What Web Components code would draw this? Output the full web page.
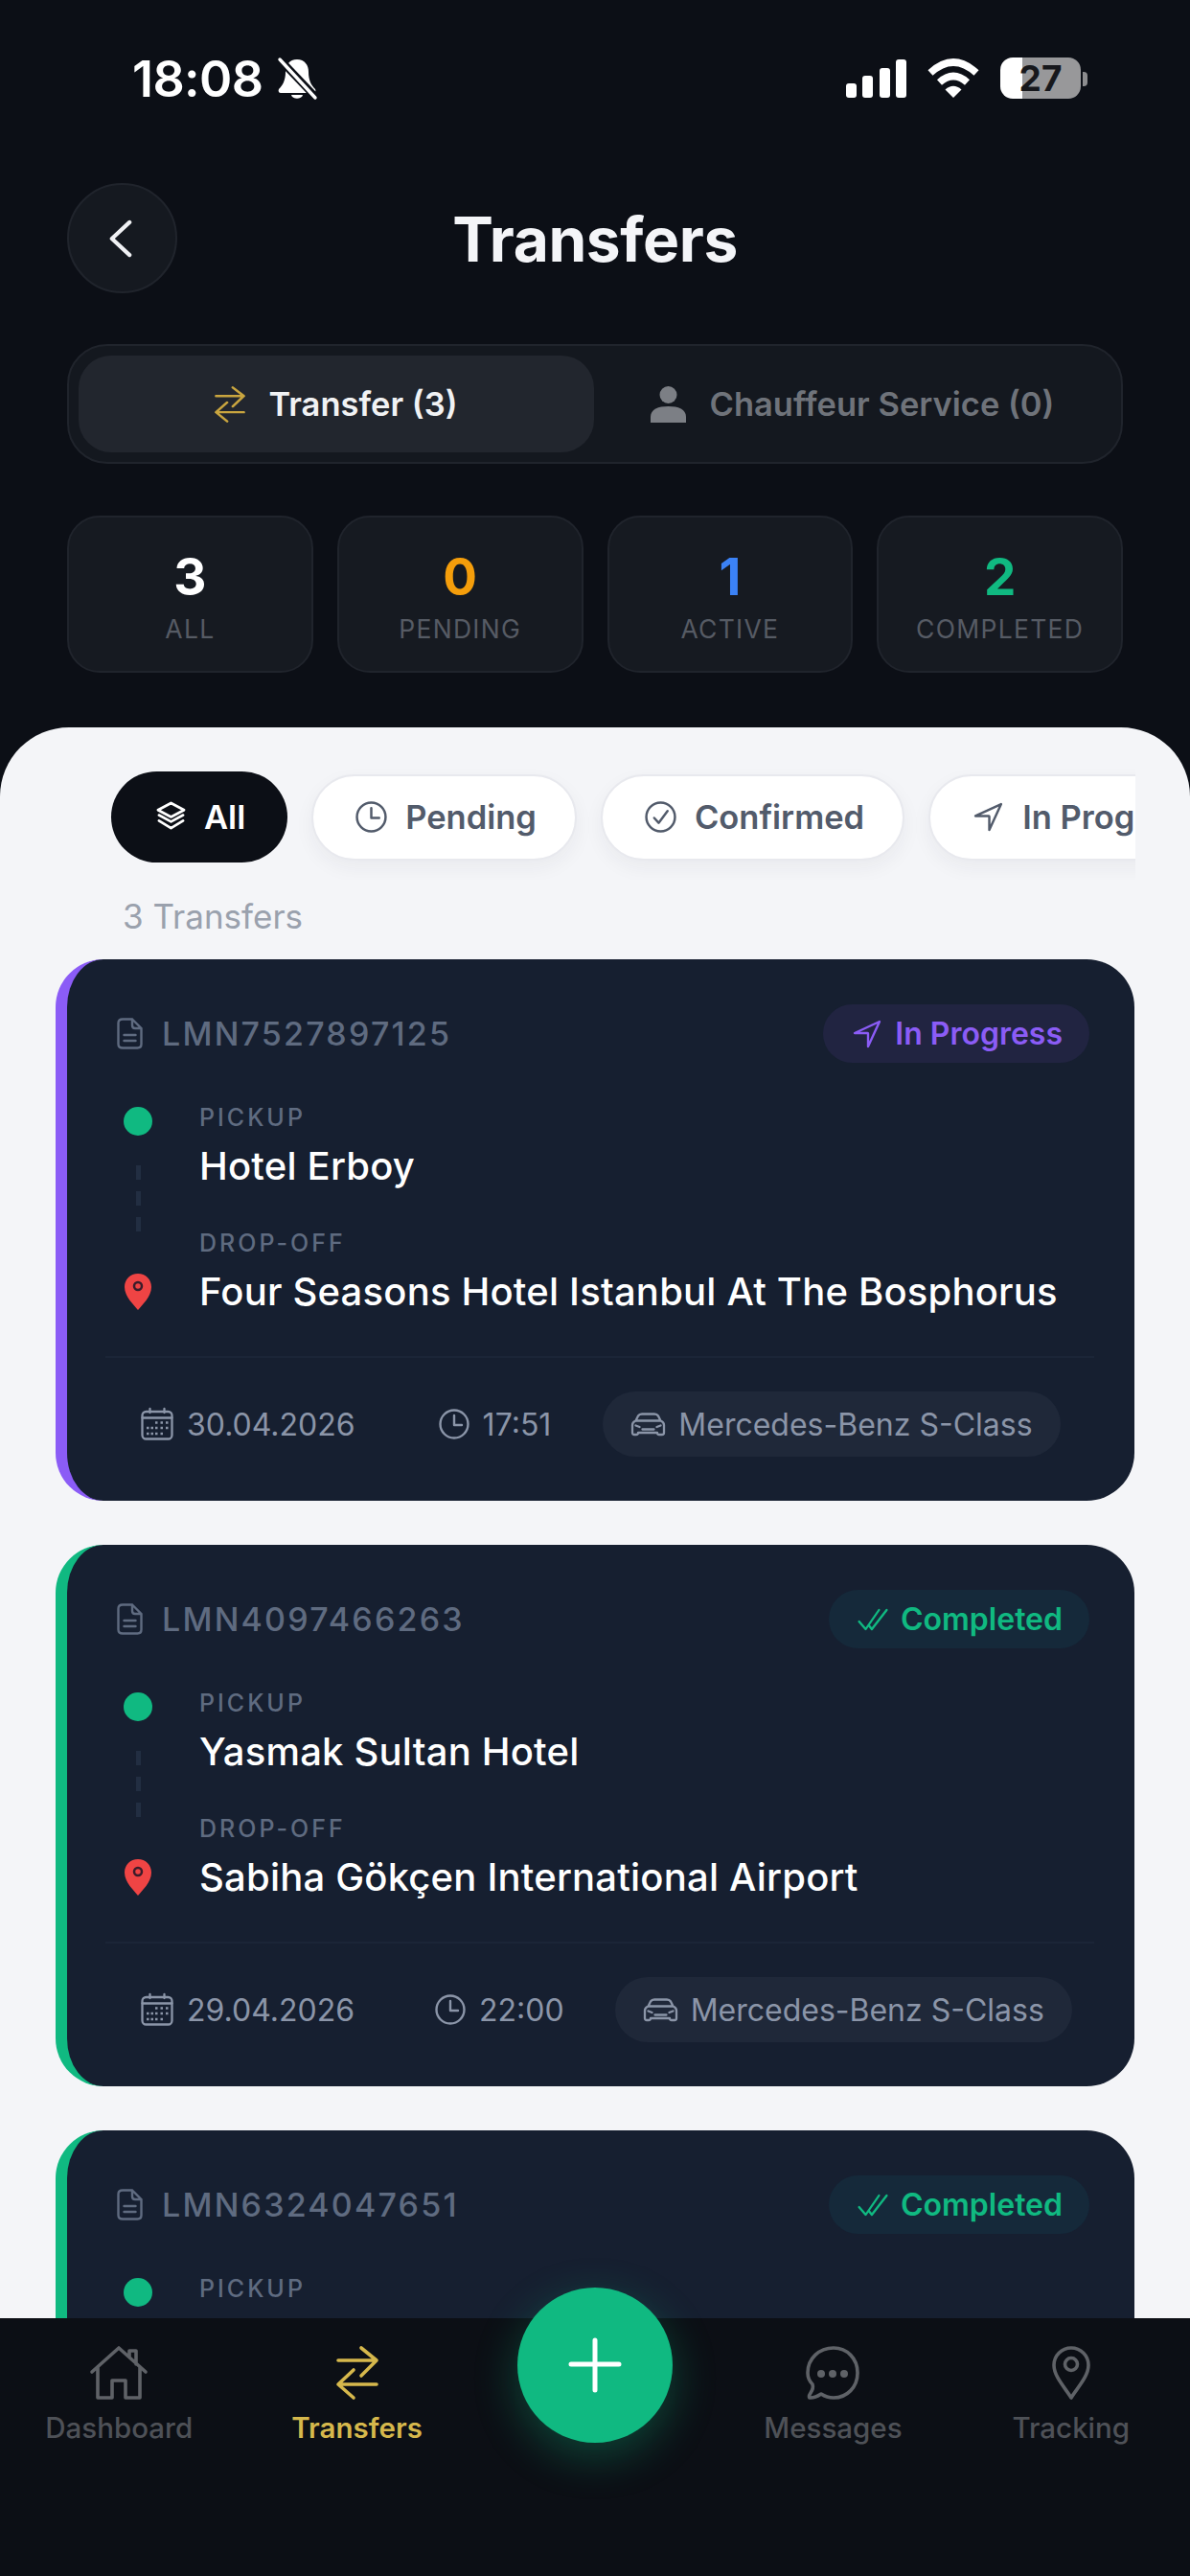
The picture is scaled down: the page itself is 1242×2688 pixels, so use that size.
<!DOCTYPE html>
<html lang="en">
<head>
<meta charset="utf-8">
<title>Transfers</title>
<style>
  html, body { margin: 0; background: #0c0f16; }
  body { font-family: Inter, "Liberation Sans", sans-serif; }
</style>
</head>
<body>
<transfers-app></transfers-app>

<script>
const ICONS = {
  chevron: { box: '0 0 26 40', body: '<path d="M23 2 3 20l20 18" fill="none" stroke="currentColor" stroke-width="4.5" stroke-linecap="round" stroke-linejoin="round"/>' },
  swap: { box: '0 0 44 56', body: '<path d="M2 15h39M26 2l16 13-16 16M42 40H3M18 25 2 40l16 14" fill="none" stroke="currentColor" stroke-width="3.6" stroke-linecap="round" stroke-linejoin="round"/>' },
  person: { box: '0 0 37 38', body: '<circle cx="18.5" cy="9" r="9" fill="currentColor"/><path d="M0 38v-6c0-8 8-11 18.5-11S37 24 37 32v6z" fill="currentColor"/>' },
  layers: { box: '0 0 34 34', body: '<path d="M17 2 31 9.5 17 17 3 9.5zM4 15l13 7 13-7M4 21l13 8 13-8" fill="none" stroke="currentColor" stroke-width="2.8" stroke-linejoin="round" stroke-linecap="round"/>' },
  clock: { box: '0 0 32 32', body: '<circle cx="16" cy="16" r="14.5" fill="none" stroke="currentColor" stroke-width="2.4"/><path d="M16 7v10h8" fill="none" stroke="currentColor" stroke-width="2.4" stroke-linecap="round" stroke-linejoin="round"/>' },
  check: { box: '0 0 32 32', body: '<circle cx="16" cy="16" r="14.5" fill="none" stroke="currentColor" stroke-width="2.4"/><path d="m9.5 17 4.5 5 9-12" fill="none" stroke="currentColor" stroke-width="2.4" stroke-linecap="round" stroke-linejoin="round"/>' },
  navigate: { box: '0 0 512 512', body: '<path d="M464 48 48 240.14h216a8 8 0 0 1 8 8V464z" fill="none" stroke="currentColor" stroke-width="38" stroke-linecap="round" stroke-linejoin="round"/>' },
  doublecheck: { box: '0 0 30 24', body: '<path d="m1.5 14 6.5 8L21 2M11 18l3 4L28.5 2" fill="none" stroke="currentColor" stroke-width="2.2" stroke-linecap="round" stroke-linejoin="round"/>' },
  doc: { box: '0 0 27 33', body: '<path d="M6 1.5h10L25.5 11v16.5q0 4-4 4H6q-4.5 0-4.5-4V5.5q0-4 4.5-4zM16 1.5V8q0 3 3 3h6.5M7.5 18h12M7.5 24h12" fill="none" stroke="currentColor" stroke-width="2.4" stroke-linecap="round" stroke-linejoin="round"/>' },
  pin: { box: '0 0 28 38', body: '<path d="M14 0C6 0 0 6 0 14c0 10 10 19 14 24 4-5 14-14 14-24C28 6 22 0 14 0z" fill="#ef4444"/><circle cx="14" cy="13" r="4" fill="none" stroke="#3b1c2a" stroke-width="2.5"/>' },
  calendar: { box: '0 0 34 34', body: '<rect x="1.5" y="4" width="31" height="28.5" rx="4" fill="none" stroke="currentColor" stroke-width="2.3"/><path d="M1.5 10.5h31M9.5 1v4M24.5 1v4" fill="none" stroke="currentColor" stroke-width="2.3" stroke-linecap="round"/><path d="M15 15.5h2.5M20.5 15.5H23M26 15.5h2.5M6 21h2.5M10.5 21H13M15 21h2.5M20.5 21H23M26 21h2.5M6 27h2.5M10.5 27H13M15 27h2.5M20.5 27H23" fill="none" stroke="currentColor" stroke-width="2.6"/>' },
  car: { box: '0 0 37 25', body: '<path d="M2 13c0-2 1-3.5 3.5-4.5L8 3.5C9 2 10 1.5 12 1.5h13c2 0 3 .5 4 2l2.5 5c2.5 1 3.5 2.5 3.5 4.5v8q0 2-2 2h-3q-2 0-2-2H8q0 2-2 2H4q-2 0-2-2zM6 8.5h25M12.5 17.5h12" fill="none" stroke="currentColor" stroke-width="2.3" stroke-linecap="round" stroke-linejoin="round"/><path d="M5.5 13.5l4 1.5M31.5 13.5l-4 1.5" fill="none" stroke="currentColor" stroke-width="2.3" stroke-linecap="round"/>' },
  home: { box: '0 0 60 56', body: '<path d="M2 27 30 2l28 25M8 22v32h15V36h14v18h15V22M41 11V5h7v14" fill="none" stroke="currentColor" stroke-width="3.6" stroke-linecap="round" stroke-linejoin="round"/>' },
  message: { box: '0 0 56 56', body: '<path d="M5 54c-2 0-2-2 0-5 2-3 3-6 2-9C3 36 2 32 2 28 2 13 14 2 29 2c14 0 25 11 25 26S43 54 29 54c-6 0-10-2-13-4-3 2-8 4-11 4z" fill="none" stroke="currentColor" stroke-width="3.6" stroke-linejoin="round"/><circle cx="16" cy="29" r="4" fill="currentColor"/><circle cx="28" cy="29" r="4" fill="currentColor"/><circle cx="40" cy="29" r="4" fill="currentColor"/>' },
  location: { box: '0 0 40 56', body: '<path d="M20 54C14 44 2 32 2 20 2 10 10 2 20 2s18 8 18 18c0 12-12 24-18 34z" fill="none" stroke="currentColor" stroke-width="3.6" stroke-linejoin="round"/><circle cx="20" cy="19" r="6.5" fill="none" stroke="currentColor" stroke-width="3.6"/>' },
  plus: { box: '0 0 54 56', body: '<path d="M27 2v52M2 27h50" fill="none" stroke="currentColor" stroke-width="5" stroke-linecap="round"/>' },
  bell: { box: '0 0 40 43', body: '<path d="M20 0c-8 0-12 6-12 13 0 9-3 14-7 18-1 2 0 4 2 4h34c2 0 3-2 2-4-4-4-7-9-7-18 0-7-4-13-12-13z" fill="currentColor"/><path d="M14 37h12c-1 5-11 5-12 0z" fill="currentColor"/><path d="M1-1l40 42" stroke="#0c0f16" stroke-width="8"/><path d="M2 0l37 40" stroke="currentColor" stroke-width="3.4" stroke-linecap="round"/>' },
  signal: { box: '0 0 63 40', body: '<rect x="0" y="25" width="11" height="15" rx="3" fill="currentColor"/><rect x="17" y="17" width="11" height="23" rx="3" fill="currentColor"/><rect x="35" y="9" width="11" height="31" rx="3" fill="currentColor"/><rect x="52" y="0" width="11" height="40" rx="3" fill="currentColor"/>' },
  wifi: { box: '0 0 56 42', body: '<path d="M4 16Q28-6 52 16M13.5 26Q28 13 42.5 26" fill="none" stroke="currentColor" stroke-width="7.5"/><path d="M19.5 33.5Q28 26 36.5 33.5L28 42z" fill="currentColor"/>' }
};

class AppIcon extends HTMLElement {
  connectedCallback() {
    const icon = ICONS[this.getAttribute('name')];
    const w = this.getAttribute('w') || 32;
    const h = this.getAttribute('h') || w;
    this.attachShadow({ mode: 'open' }).innerHTML = `
      <style>:host { display: block; flex: none; width: ${w}px; height: ${h}px; } svg { display: block; width: 100%; height: 100%; overflow: visible; }</style>
      <svg viewBox="${icon.box}" preserveAspectRatio="none" aria-hidden="true">${icon.body}</svg>`;
  }
}

class StatusBar extends HTMLElement {
  connectedCallback() {
    this.attachShadow({ mode: 'open' }).innerHTML = `
      <style>
        :host { display: flex; box-sizing: border-box; height: 191px; padding: 60px 107px 0 138px; justify-content: space-between; align-items: flex-start; color: #fff; }
        .left, .right { display: flex; align-items: flex-start; }
        .time { font-size: 52px; font-weight: 600; line-height: 46px; letter-spacing: -.6px; margin-right: 16px; }
        .left app-icon { margin-top: 2px; }
        .right app-icon { margin-top: 2px; }
        .right app-icon[name=wifi] { margin: 0 21px; }
        .battery { width: 84px; height: 43px; border-radius: 13px; overflow: hidden; background: linear-gradient(90deg, #fff 27%, #98989a 27%); color: #17181c; font-size: 37px; font-weight: 700; line-height: 43px; text-align: center; }
        .nub { width: 5px; height: 15px; margin: 15px 0 0 2px; background: #8d8d8f; border-radius: 0 4px 4px 0; }
      </style>
      <div class="left"><span class="time">18:08</span><app-icon name="bell" w="40" h="43"></app-icon></div>
      <div class="right">
        <app-icon name="signal" w="63" h="40"></app-icon>
        <app-icon name="wifi" w="56" h="42"></app-icon>
        <div class="battery">27</div><div class="nub"></div>
      </div>`;
  }
}

class AppHeader extends HTMLElement {
  connectedCallback() {
    this.attachShadow({ mode: 'open' }).innerHTML = `
      <style>
        :host { display: grid; grid-template-columns: 115px 1fr 115px; align-items: center; margin: 0 70px; color: #f4f5f8; }
        .back { box-sizing: border-box; width: 115px; height: 115px; border-radius: 50%; background: #151920; border: 2px solid #20242c; display: flex; align-items: center; justify-content: center; padding-right: 4px; color: #f0f1f4; }
        h1 { margin: 0; padding-top: 2px; font-size: 64px; font-weight: 700; text-align: center; line-height: 113px; letter-spacing: -.4px; }
      </style>
      <div class="back"><app-icon name="chevron" w="24" h="38"></app-icon></div>
      <h1><slot></slot></h1>
      <span></span>`;
  }
}

class ModeTabs extends HTMLElement {
  connectedCallback() {
    this.attachShadow({ mode: 'open' }).innerHTML = `
      <style>
        :host { display: grid; grid-template-columns: 538px 1fr; box-sizing: border-box; height: 125px; margin: 53px 70px 0; padding: 10px; background: #14181f; border: 2px solid #20242c; border-radius: 42px; font-size: 34.5px; font-weight: 600; }
        .tab { display: flex; align-items: center; justify-content: center; gap: 24px; color: #6f737a; border-radius: 34px; }
        .tab.on { background: #22262e; color: #f1f2f4; }
        .tab.on app-icon { color: #c9a53f; }
        .tab.off app-icon { color: #7c7f85; }
      </style>
      <div class="tab on"><app-icon name="swap" w="32" h="38"></app-icon><span>Transfer (3)</span></div>
      <div class="tab off"><app-icon name="person" w="37" h="38"></app-icon><span>Chauffeur Service (0)</span></div>`;
  }
}

class StatCard extends HTMLElement {
  connectedCallback() {
    const color = this.getAttribute('color') || '#fff';
    this.attachShadow({ mode: 'open' }).innerHTML = `
      <style>
        :host { display: flex; flex-direction: column; align-items: center; box-sizing: border-box; height: 164px; padding-top: 30px; background: #161a21; border: 2px solid #20242c; border-radius: 34px; }
        .n { font-size: 53px; font-weight: 700; line-height: 64px; color: ${color}; }
        .l { font-size: 26.5px; line-height: 36px; margin-top: 4px; letter-spacing: 1.3px; color: #565b64; }
      </style>
      <div class="n">${this.getAttribute('value')}</div>
      <div class="l"><slot></slot></div>`;
  }
}

class FilterChip extends HTMLElement {
  connectedCallback() {
    this.attachShadow({ mode: 'open' }).innerHTML = `
      <style>
        :host { display: flex; flex: none; align-items: center; gap: 19px; box-sizing: border-box; height: 90px; padding: 0 40px 0 44px; background: #fff; border: 2px solid #e8e9ee; border-radius: 45px; box-shadow: 0 8px 20px rgba(30,40,60,.05); color: #525b6b; font-size: 34.5px; font-weight: 600; }
        :host([active]) { height: 95px; padding: 0 44px 0 46px; gap: 18px; background: #0c0f16; border: 0; border-radius: 48px; color: #fff; box-shadow: none; }
      </style>
      <app-icon name="${this.getAttribute('icon')}" w="33" h="33"></app-icon>
      <span><slot></slot></span>`;
  }
}

class TransferCard extends HTMLElement {
  connectedCallback() {
    const accent = this.getAttribute('accent');
    const tint = this.getAttribute('tint');
    const icon = this.getAttribute('status-icon');
    // the last card runs under the tab bar: only what is passed in gets rendered
    const hasRest = !!this.querySelector('[slot=dropoff]');
    this.attachShadow({ mode: 'open' }).innerHTML = `
      <style>
        :host { display: block; flex: none; box-sizing: border-box; height: 565px; padding: 47px 42px 0 40px; background: #161f30; border-left: 12px solid ${accent}; border-radius: 50px; }
        .head { display: flex; align-items: center; justify-content: space-between; height: 61px; padding: 0 5px 0 12px; }
        .code { display: flex; align-items: center; gap: 20px; color: #5f6b80; font-size: 34px; font-weight: 500; letter-spacing: 2.2px; }
        .status { display: flex; align-items: center; gap: 13px; height: 61px; padding: 0 28px 0 30px; border-radius: 31px; background: ${tint}; color: ${accent}; font-size: 32px; font-weight: 600; }
        .route { display: grid; grid-template-columns: 44px 1fr; column-gap: 42px; margin: 42px 0 0 12px; height: 220px; }
        .track { display: flex; flex-direction: column; align-items: center; }
        .dot { width: 30px; height: 30px; margin-top: 4px; border-radius: 50%; background: #10b981; }
        .dash { width: 5px; height: 70px; margin: 31px 0 43px; background: repeating-linear-gradient(180deg, #222e42 0 15px, transparent 15px 27px); }
        .label { font-size: 25px; font-weight: 500; line-height: 30px; letter-spacing: 3px; color: #5f6b80; }
        .name { margin-top: 11px; height: 50px; font-size: 40px; font-weight: 500; line-height: 50px; letter-spacing: .2px; color: #fff; white-space: nowrap; }
        .label.second { margin-top: 40px; }
        .meta { display: flex; align-items: center; margin-top: 44px; height: 106px; padding: 36px 0 2px 37px; box-sizing: border-box; border-top: 2px solid #1b2537; color: #8b95a8; font-size: 32px; }
        .item { display: flex; align-items: center; gap: 14px; }
        .date { margin-right: var(--date-gap, 87px); }
        .time { margin-right: var(--time-gap, 54px); }
        .vehicle { height: 68px; padding: 0 29px; gap: 13px; border-radius: 34px; background: #1f2839; }
      </style>
      <div class="head">
        <div class="code"><app-icon name="doc" w="27" h="33"></app-icon><slot name="code"></slot></div>
        <div class="status"><app-icon name="${icon}" w="32" h="${icon === 'doublecheck' ? 24 : 32}"></app-icon><slot name="status"></slot></div>
      </div>
      <div class="route">
        <div class="track">
          <div class="dot"></div><div class="dash"></div><app-icon name="pin" w="28" h="38"></app-icon>
        </div>
        <div>
          <div class="label">PICKUP</div>
          <div class="name"><slot name="pickup"></slot></div>
          ${hasRest ? `<div class="label second">DROP-OFF</div>
          <div class="name"><slot name="dropoff"></slot></div>` : ''}
        </div>
      </div>
      ${hasRest ? `<div class="meta">
        <div class="item date"><app-icon name="calendar" w="34" h="34"></app-icon><slot name="date"></slot></div>
        <div class="item time"><app-icon name="clock" w="32" h="32"></app-icon><slot name="time"></slot></div>
        <div class="item vehicle"><app-icon name="car" w="37" h="25"></app-icon><slot name="vehicle"></slot></div>
      </div>` : ''}`;
  }
}

class TransferSheet extends HTMLElement {
  connectedCallback() {
    this.attachShadow({ mode: 'open' }).innerHTML = `
      <style>
        :host { display: block; flex: 1; min-height: 0; margin-top: 57px; overflow: hidden; background: #f4f5f8; border-radius: 72px 72px 0 0; }
        .filters { display: flex; align-items: center; gap: 25px; margin: 22px 57px 0 58px; padding: 24px 0 18px 58px; overflow: hidden; }
        .count { margin: 0 0 0 128px; font-size: 35px; line-height: 44px; color: #9aa1ad; padding-top: 16px; }
        .list { display: flex; flex-direction: column; gap: 46px; margin: 23px 58px 0; }
      </style>
      <div class="filters"><slot name="filters"></slot></div>
      <div class="count"><slot name="count"></slot></div>
      <div class="list"><slot></slot></div>`;
  }
}

class NavItem extends HTMLElement {
  connectedCallback() {
    const w = this.getAttribute('w');
    this.attachShadow({ mode: 'open' }).innerHTML = `
      <style>
        :host { display: flex; flex-direction: column; align-items: center; color: #5f6267; }
        :host([active]) { color: #d6b84c; }
        .l { margin-top: 10px; font-size: 29.5px; line-height: 38px; font-weight: 500; color: #4e5157; white-space: nowrap; }
        :host([active]) .l { color: #d6b84c; font-weight: 600; }
      </style>
      <app-icon name="${this.getAttribute('icon')}" w="${w}" h="56"></app-icon>
      <div class="l"><slot></slot></div>`;
  }
}

class BottomNav extends HTMLElement {
  connectedCallback() {
    this.attachShadow({ mode: 'open' }).innerHTML = `
      <style>
        :host { display: grid; grid-template-columns: repeat(5, 1fr); position: relative; flex: none; box-sizing: border-box; height: 269px; padding-top: 29px; align-items: start; background: #0c0f15; }
        .fab { position: absolute; left: 540px; top: -32px; width: 162px; height: 162px; border-radius: 50%; display: flex; align-items: center; justify-content: center; background: #10b981; color: #fff; box-shadow: 0 14px 46px rgba(16,185,129,.32); }
      </style>
      <slot name="a"></slot><slot name="b"></slot><span></span><slot name="c"></slot><slot name="d"></slot>
      <div class="fab"><app-icon name="plus" w="54" h="56"></app-icon></div>`;
  }
}

class TransfersApp extends HTMLElement {
  connectedCallback() {
    this.attachShadow({ mode: 'open' }).innerHTML = `
      <style>
        :host { display: flex; flex-direction: column; width: 1242px; height: 2688px; overflow: hidden; background: #0c0f16; }
        .stats { display: grid; grid-template-columns: repeat(4, 1fr); gap: 25px; margin: 54px 70px 0; }
      </style>
      <status-bar></status-bar>
      <app-header>Transfers</app-header>
      <mode-tabs></mode-tabs>
      <div class="stats">
        <stat-card value="3">ALL</stat-card>
        <stat-card value="0" color="#f59e0b">PENDING</stat-card>
        <stat-card value="1" color="#3b82f6">ACTIVE</stat-card>
        <stat-card value="2" color="#10b981">COMPLETED</stat-card>
      </div>
      <transfer-sheet>
        <filter-chip slot="filters" icon="layers" active>All</filter-chip>
        <filter-chip slot="filters" icon="clock">Pending</filter-chip>
        <filter-chip slot="filters" icon="check">Confirmed</filter-chip>
        <filter-chip slot="filters" icon="navigate">In Progress</filter-chip>
        <span slot="count">3 Transfers</span>
        <transfer-card accent="#8b5cf6" tint="#212441" status-icon="navigate">
          <span slot="code">LMN7527897125</span><span slot="status">In Progress</span>
          <span slot="pickup">Hotel Erboy</span><span slot="dropoff">Four Seasons Hotel Istanbul At The Bosphorus</span>
          <span slot="date">30.04.2026</span><span slot="time">17:51</span><span slot="vehicle">Mercedes-Benz S-Class</span>
        </transfer-card>
        <transfer-card accent="#10b981" tint="#15293a" status-icon="doublecheck" style="--date-gap: 84px; --time-gap: 53px">
          <span slot="code">LMN4097466263</span><span slot="status">Completed</span>
          <span slot="pickup">Yasmak Sultan Hotel</span><span slot="dropoff">Sabiha Gökçen International Airport</span>
          <span slot="date">29.04.2026</span><span slot="time">22:00</span><span slot="vehicle">Mercedes-Benz S-Class</span>
        </transfer-card>
        <transfer-card accent="#10b981" tint="#15293a" status-icon="doublecheck">
          <span slot="code">LMN6324047651</span><span slot="status">Completed</span>
        </transfer-card>
      </transfer-sheet>
      <bottom-nav>
        <nav-item slot="a" icon="home" w="60">Dashboard</nav-item>
        <nav-item slot="b" icon="swap" w="44" active>Transfers</nav-item>
        <nav-item slot="c" icon="message" w="56">Messages</nav-item>
        <nav-item slot="d" icon="location" w="40">Tracking</nav-item>
      </bottom-nav>`;
  }
}

customElements.define('app-icon', AppIcon);
customElements.define('status-bar', StatusBar);
customElements.define('app-header', AppHeader);
customElements.define('mode-tabs', ModeTabs);
customElements.define('stat-card', StatCard);
customElements.define('filter-chip', FilterChip);
customElements.define('transfer-card', TransferCard);
customElements.define('transfer-sheet', TransferSheet);
customElements.define('nav-item', NavItem);
customElements.define('bottom-nav', BottomNav);
customElements.define('transfers-app', TransfersApp);
</script>
</body>
</html>
